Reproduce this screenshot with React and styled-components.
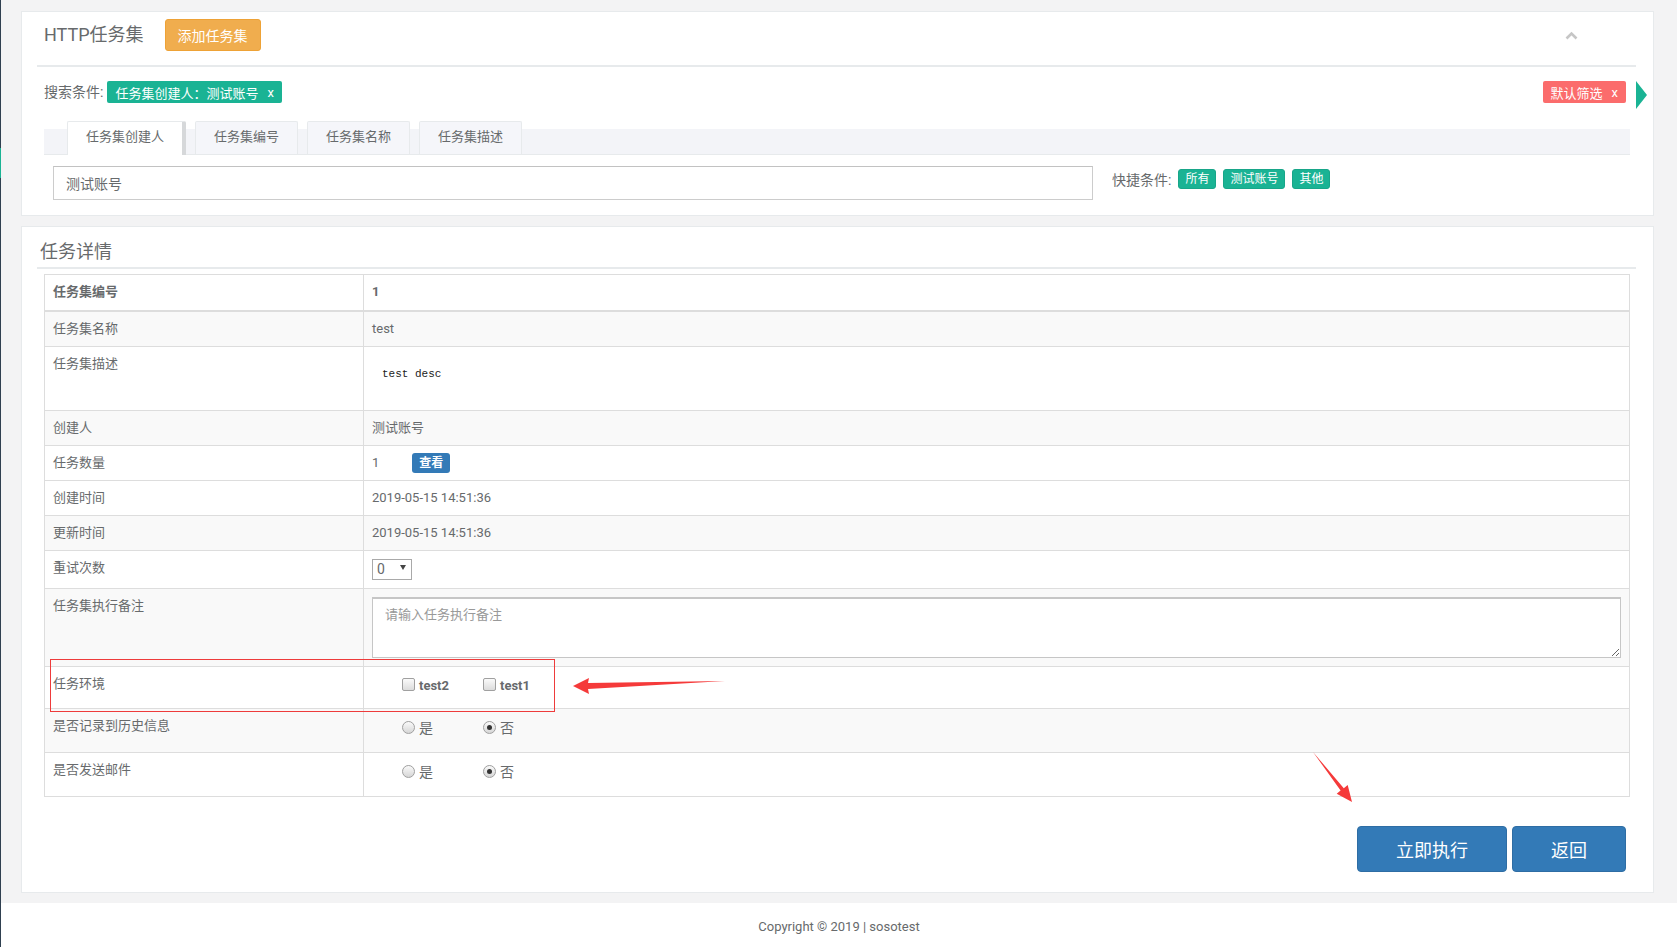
import React from 'react'
import styled, { createGlobalStyle } from 'styled-components'

const GlobalStyle = createGlobalStyle`
  html, body { margin: 0; padding: 0; }
  body {
    font-family: Roboto, "Noto Sans CJK SC", sans-serif;
    font-size: 13px;
    color: #676a6c;
    background: #fff;
  }
  * { box-sizing: border-box; }
`

const Page = styled.div`
  position: relative;
  display: flex;
  width: 1677px;
  min-height: 947px;
`

const Sidebar = styled.div`
  width: 1px;
  flex-shrink: 0;
  background: #2f4050;
  padding-top: 148px;
`

const SidebarMark = styled.div`
  height: 30px;
  background: #1ab394;
`

const Main = styled.div`
  flex: 1;
  display: flex;
  flex-direction: column;
`

const Content = styled.div`
  background: #f3f3f4;
  padding: 11px 23px 10px 20px;
  display: flex;
  flex-direction: column;
  gap: 10px;
`

const Panel = styled.section`
  background: #fff;
  border: 1px solid #e7eaec;
  padding: ${p => p.$pad};
`

const PanelHead = styled.div`
  display: flex;
  align-items: center;
  padding: 7px 0 14px 7px;
  border-bottom: 2px solid #e7eaec;
  margin-right: 2px;
`

const Title = styled.h2`
  margin: 0 21px 0 0;
  font-size: 18px;
  font-weight: 400;
  line-height: 24px;
  color: #676a6c;
`

const AddButton = styled.button`
  height: 32px;
  padding: 0 12px;
  border: 1px solid #eea236;
  border-radius: 3px;
  background: #f0ad4e;
  color: #fff;
  font-family: inherit;
  font-size: 14px;
`

const Collapse = styled.span`
  margin-left: auto;
  margin-right: 58px;
  display: flex;
`

const SearchRow = styled.div`
  display: flex;
  align-items: flex-start;
  margin-top: 14px;
  padding-left: 7px;
`

const SearchLabel = styled.span`
  font-size: 14px;
  line-height: 22px;
  margin-right: 4px;
`

const FilterTag = styled.span`
  display: inline-flex;
  align-items: center;
  height: 22px;
  padding: 0 8px;
  border-radius: 2px;
  background: ${p => p.$color};
  color: #fff;
  font-size: 13px;
  white-space: nowrap;
`

const Close = styled.span`
  margin-left: 9px;
  font-family: Roboto, sans-serif;
`

const PushRight = styled.div`
  margin-left: auto;
  display: flex;
  align-items: flex-start;
  gap: 10px;
  margin-right: -9px;
`

const Arrow = styled.span`
  width: 0;
  height: 0;
  border-top: 14px solid transparent;
  border-bottom: 14px solid transparent;
  border-left: 11px solid #1ab394;
`

const TabBar = styled.div`
  display: flex;
  align-items: flex-end;
  gap: 9px;
  height: 34px;
  margin: 12px 8px 0 7px;
  padding-left: 23px;
  background: linear-gradient(to bottom, transparent 8px, #f3f4f8 8px);
  border-bottom: 1px solid #e7eaec;
`

const Tab = styled.div`
  height: ${p => (p.$active ? '34px' : '33px')};
  margin-bottom: ${p => (p.$active ? '-1px' : '0')};
  padding: 0 18px;
  border: 1px solid #e7eaec;
  border-bottom: none;
  border-right: ${p => (p.$active ? '4px solid #d6d8da' : '1px solid #e7eaec')};
  border-radius: 2px 2px 0 0;
  background: ${p => (p.$active ? '#fff' : '#f5f6fa')};
  line-height: 29px;
  font-size: 13px;
  color: #676a6c;
`

const InputRow = styled.div`
  display: flex;
  align-items: flex-start;
  margin-top: 11px;
  padding-left: 16px;
`

const TextInput = styled.input`
  flex: 0 0 1040px;
  height: 34px;
  padding: 0 12px;
  border: 1px solid #ccc;
  border-top-color: #c2c2c2;
  font-family: inherit;
  font-size: 14px;
  color: #676a6c;
  outline: none;
`

const Quick = styled.div`
  display: flex;
  align-items: center;
  gap: 7px;
  margin-left: 19px;
  padding-top: 3px;
`

const QuickLabel = styled.span`
  font-size: 14px;
`

const QuickTag = styled.span`
  height: 20px;
  padding: 0 6px;
  border: 1px solid #18a689;
  border-radius: 3px;
  background: #1ab394;
  color: #fff;
  font-size: 12px;
  line-height: 18px;
`

const SectionTitle = styled.h3`
  margin: 0;
  padding: 0 0 3px 3px;
  font-size: 18px;
  font-weight: 400;
  line-height: 24px;
  color: #676a6c;
  border-bottom: 2px solid #e7eaec;
  margin-right: 2px;
`

const Table = styled.table`
  width: calc(100% - 15px);
  margin: 5px 8px 0 7px;
  border-collapse: collapse;
  border: 1px solid #ddd;
`

const Row = styled.tr`
  height: ${p => p.$h}px;
  background: ${p => (p.$grey ? '#f9f9f9' : '#fff')};
  border-bottom: ${p => (p.$head ? '2px' : '1px')} solid #ddd;
`

const Cell = styled.td`
  border-left: 1px solid #ddd;
  padding: 8px;
  vertical-align: top;
  line-height: 18px;
  font-size: 13px;
  font-weight: ${p => (p.$bold ? 700 : 400)};
  width: ${p => (p.$label ? '319px' : 'auto')};
`

const Pre = styled.pre`
  margin: 0;
  padding: 10px;
  font-family: "Liberation Mono", monospace;
  font-size: 11px;
  line-height: 18px;
  color: #222;
`

const Inline = styled.div`
  display: flex;
  align-items: center;
  height: 18px;
`

const SmallButton = styled.span`
  margin-left: 33px;
  height: 20px;
  padding: 0 7px;
  border-radius: 3px;
  background: #337ab7;
  color: #fff;
  font-size: 12px;
  font-weight: 700;
  line-height: 20px;
`

const Select = styled.span`
  display: flex;
  align-items: center;
  justify-content: space-between;
  width: 40px;
  height: 21px;
  padding: 0 5px 0 4px;
  border: 1px solid #a9a9a9;
  font-size: 14px;
  color: #676a6c;
`

const Caret = styled.span`
  width: 0;
  height: 0;
  margin-bottom: 4px;
  border-left: 3px solid transparent;
  border-right: 3px solid transparent;
  border-top: 5px solid #444;
`

const Notes = styled.textarea`
  display: block;
  width: 100%;
  height: 61px;
  padding: 7px 12px;
  border: 1px solid #c6c6c6;
  border-top-width: 2px;
  font-family: inherit;
  font-size: 13px;
  line-height: 18px;
  color: #676a6c;
  outline: none;
  &::placeholder { color: #999; }
`

const Options = styled.div`
  display: flex;
  padding-left: 30px;
`

const Option = styled.label`
  display: flex;
  align-items: center;
  width: 81px;
  height: 23px;
  font-size: ${p => (p.$bold ? '13px' : '14px')};
  font-weight: ${p => (p.$bold ? 700 : 400)};
  gap: 4px;
`

const Check = styled.span`
  width: 13px;
  height: 13px;
  margin-top: -4px;
  border: 1px solid #a0a0a0;
  border-radius: 2px;
  background: linear-gradient(#fafafa, #dcdcdc);
`

const Radio = styled.span`
  position: relative;
  width: 13px;
  height: 13px;
  margin-top: -2px;
  border: 1px solid #a0a0a0;
  border-radius: 50%;
  background: linear-gradient(#fafafa, #d6d6d6);
  &::after {
    content: '';
    display: ${p => (p.$on ? 'block' : 'none')};
    position: absolute;
    left: 3px;
    top: 3px;
    width: 5px;
    height: 5px;
    border-radius: 50%;
    background: #333;
  }
`

const Actions = styled.div`
  display: flex;
  justify-content: flex-end;
  gap: 5px;
  margin-top: 29px;
  padding-right: 12px;
`

const BigButton = styled.button`
  height: 46px;
  padding: 0 38px;
  border: 1px solid #2e6da4;
  border-radius: 4px;
  background: #337ab7;
  color: #fff;
  font-family: inherit;
  font-size: 18px;
`

const Footer = styled.footer`
  height: 43px;
  padding-top: 15px;
  background: #fff;
  text-align: center;
  font-size: 13px;
  line-height: 18px;
  color: #676a6c;
`

const Mark = styled.div`
  position: absolute;
  left: 50px;
  top: 659px;
  width: 505px;
  height: 53px;
  border: 1px solid #ee3b3b;
  pointer-events: none;
`

const Pointer = styled.svg`
  position: absolute;
  left: ${p => p.$x}px;
  top: ${p => p.$y}px;
  pointer-events: none;
`

const rows = [
  { label: '任务集编号', h: 36, head: true, bold: true, value: '1' },
  { label: '任务集名称', h: 33, grey: true, value: 'test' },
  { label: '任务集描述', h: 64, value: <Pre>test desc</Pre> },
  { label: '创建人', h: 35, grey: true, value: '测试账号' },
  { label: '任务数量', h: 33, value: <Inline>1<SmallButton>查看</SmallButton></Inline> },
  { label: '创建时间', h: 33, value: '2019-05-15 14:51:36' },
  { label: '更新时间', h: 34, grey: true, value: '2019-05-15 14:51:36' },
  { label: '重试次数', h: 38, value: <Select>0<Caret /></Select> },
  { label: '任务集执行备注', h: 77, grey: true, value: <Notes placeholder="请输入任务执行备注" /> },
  {
    label: '任务环境', h: 42,
    value: (
      <Options>
        <Option $bold><Check />test2</Option>
        <Option $bold><Check />test1</Option>
      </Options>
    ),
  },
  {
    label: '是否记录到历史信息', h: 44, grey: true,
    value: (
      <Options>
        <Option><Radio />是</Option>
        <Option><Radio $on />否</Option>
      </Options>
    ),
  },
  {
    label: '是否发送邮件', h: 44,
    value: (
      <Options>
        <Option><Radio />是</Option>
        <Option><Radio $on />否</Option>
      </Options>
    ),
  },
]

const tabs = ['任务集创建人', '任务集编号', '任务集名称', '任务集描述']

export default function App() {
  return (
    <Page>
      <GlobalStyle />
      <Sidebar><SidebarMark /></Sidebar>
      <Main>
        <Content>
          <Panel $pad="0 15px 15px 15px">
            <PanelHead>
              <Title>HTTP任务集</Title>
              <AddButton>添加任务集</AddButton>
              <Collapse>
                <svg width="13" height="9" viewBox="0 0 13 9">
                  <polyline points="1.5,7.5 6.5,2.5 11.5,7.5" fill="none" stroke="#c6c6c6" strokeWidth="2.6" />
                </svg>
              </Collapse>
            </PanelHead>
            <SearchRow>
              <SearchLabel>搜索条件:</SearchLabel>
              <FilterTag $color="#1ab394">任务集创建人：测试账号<Close>x</Close></FilterTag>
              <PushRight>
                <FilterTag $color="#fb6c6c">默认筛选<Close>x</Close></FilterTag>
                <Arrow />
              </PushRight>
            </SearchRow>
            <TabBar>
              {tabs.map((t, i) => (
                <Tab key={t} $active={i === 0}>{t}</Tab>
              ))}
            </TabBar>
            <InputRow>
              <TextInput defaultValue="测试账号" />
              <Quick>
                <QuickLabel>快捷条件:</QuickLabel>
                <QuickTag>所有</QuickTag>
                <QuickTag>测试账号</QuickTag>
                <QuickTag>其他</QuickTag>
              </Quick>
            </InputRow>
          </Panel>

          <Panel $pad="13px 15px 20px 15px">
            <SectionTitle>任务详情</SectionTitle>
            <Table>
              <tbody>
                {rows.map(r => (
                  <Row key={r.label} $h={r.h} $grey={r.grey} $head={r.head}>
                    <Cell $label $bold={r.bold}>{r.label}</Cell>
                    <Cell $bold={r.bold}>{r.value}</Cell>
                  </Row>
                ))}
              </tbody>
            </Table>
            <Actions>
              <BigButton>立即执行</BigButton>
              <BigButton>返回</BigButton>
            </Actions>
          </Panel>
        </Content>
        <Footer>Copyright © 2019 | sosotest</Footer>
      </Main>

      <Mark />
      <Pointer $x={570} $y={675} width="160" height="22" viewBox="0 0 160 22">
        <polygon points="3,11 19,3 18,8 155,6 18,14 19,19" fill="#f53a3a" />
      </Pointer>
      <Pointer $x={1308} $y={748} width="50" height="60" viewBox="0 0 50 60">
        <polygon points="5,4 35.8,40.2 39.7,37.1 44,54 28.7,45.7 32.6,42.6" fill="#f53a3a" />
      </Pointer>
    </Page>
  )
}
